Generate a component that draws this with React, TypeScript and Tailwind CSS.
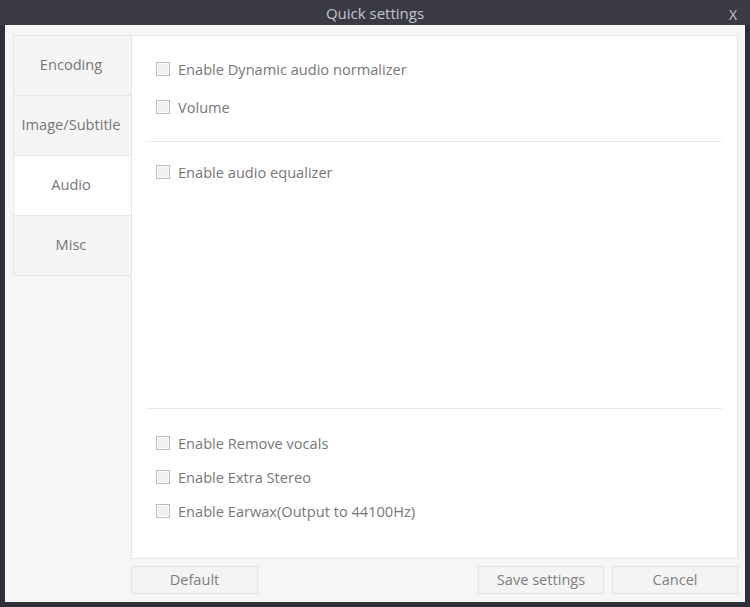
import React from "react";

function Check({ label }: { label: string }) {
  return (
    <div className="flex items-center h-[20px]">
      <div className="w-[14px] h-[14px] border border-[#bdbdbd] bg-[#f0f0f0] shadow-[inset_0_0_0_1px_#fafafa]" />
      <span className="ml-[8px] text-[14.6px] text-[#777777] leading-none">{label}</span>
    </div>
  );
}

function Tab({ label, active }: { label: string; active?: boolean }) {
  return (
    <div
      className={
        "h-[61px] flex items-center justify-center pb-[2px] pr-[3px] text-[14.6px] text-[#777777] border border-[#e6e6e6] -mt-px first:mt-0 " +
        (active ? "bg-white border-r-white" : "bg-[#f5f5f5]")
      }
    >
      {label}
    </div>
  );
}

function Btn({ label, w }: { label: string; w: string }) {
  return (
    <div
      className={
        "h-[28px] flex items-center justify-center pb-[1px] text-[14.6px] text-[#808080] bg-[#f4f4f4] border border-[#e4e4e4] " + w
      }
    >
      {label}
    </div>
  );
}

export default function App() {
  return (
    <div
      className="w-[750px] h-[607px] bg-[#30303a] flex flex-col"
      style={{ fontFamily: '"Open Sans", "Noto Sans", sans-serif' }}
    >
      <div className="h-[25px] relative flex items-center justify-center bg-[#3a3a46]">
        <span className="text-[15px] text-[#c4c4ca] mt-[2px]">Quick settings</span>
        <span className="absolute right-[13px] top-[4px] text-[14px] text-[#c4c4ca]">X</span>
      </div>
      <div className="flex-1 mx-[5px] mb-[5px] bg-[#f6f6f6] flex flex-col pt-[10px] pl-[8px] pr-[7px]">
        <div className="flex h-[524px]">
          <div className="w-[119px] flex flex-col">
            <Tab label="Encoding" />
            <Tab label="Image/Subtitle" />
            <Tab label="Audio" active />
            <Tab label="Misc" />
          </div>
          <div className="flex-1 -ml-px bg-white border border-[#e6e6e6] flex flex-col pl-[24px] pr-[15px]">
            <div className="pt-[23px] flex flex-col gap-[18px]">
              <Check label="Enable Dynamic audio normalizer" />
              <Check label="Volume" />
            </div>
            <div className="mt-[24px] -ml-[10px] h-px bg-[#e8e8e8]" />
            <div className="pt-[20px]">
              <Check label="Enable audio equalizer" />
            </div>
            <div className="mt-[226px] -ml-[10px] h-px bg-[#e8e8e8]" />
            <div className="pt-[24px] flex flex-col gap-[14px]">
              <Check label="Enable Remove vocals" />
              <Check label="Enable Extra Stereo" />
              <Check label="Enable Earwax(Output to 44100Hz)" />
            </div>
          </div>
        </div>
        <div className="flex mt-[7px] pl-[118px]">
          <Btn label="Default" w="w-[127px]" />
          <div className="flex-1" />
          <Btn label="Save settings" w="w-[126px]" />
          <div className="w-[8px]" />
          <Btn label="Cancel" w="w-[126px]" />
        </div>
      </div>
    </div>
  );
}
